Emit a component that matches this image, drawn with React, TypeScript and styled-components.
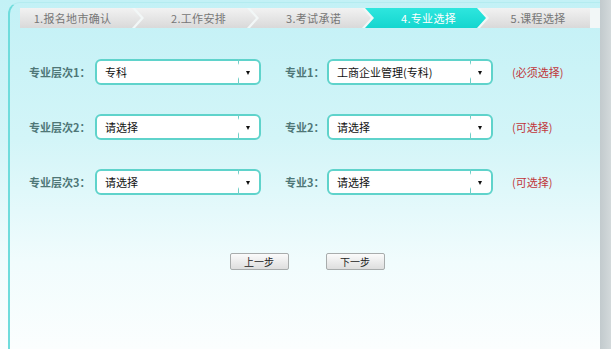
import React from 'react';
import styled, { createGlobalStyle } from 'styled-components';

const GlobalStyle = createGlobalStyle`
	html, body {
		margin: 0;
		padding: 0;
	}
	body {
		font-family: "Noto Sans CJK SC", "Liberation Sans", sans-serif;
	}
`;

const Page = styled.div`
	width: 611px;
	height: 349px;
	display: flex;
	overflow: hidden;
	background: linear-gradient(to bottom, #c3f1f6 0%, #d3f5f8 40%, #f1fcfd 75%, #fbfefe 100%);
`;

const Panel = styled.div`
	flex: 1;
	margin: 2px 0 0 8px;
	border-left: 2px solid #6fdcdc;
	border-top: 1px solid #b4ecf0;
	border-top-left-radius: 12px;
	display: flex;
	flex-direction: column;
	padding: 5px 0 0 10px;
`;

const ScrollTrack = styled.div`
	width: 11px;
	background: linear-gradient(to right, #c2cacd, #d3d9db);
`;

const StepBar = styled.div`
	display: flex;
	height: 20px;
	background: #f2f7f7;
`;

const Step = styled.div<{ $active?: boolean; $first?: boolean; $last?: boolean }>`
	width: ${(p) => (p.$last ? '110px' : '121px')};
	margin-right: ${(p) => (p.$last ? '0' : '-6px')};
	display: flex;
	align-items: center;
	justify-content: center;
	font-size: 11px;
	letter-spacing: 0.3px;
	color: ${(p) => (p.$active ? '#ffffff' : '#767676')};
	background: ${(p) =>
		p.$active
			? 'linear-gradient(to bottom, #2ee6de, #14d6cf)'
			: 'linear-gradient(to bottom, #f2f2f2, #d9d9d9)'};
	clip-path: ${(p) =>
		p.$first
			? 'polygon(0 0, calc(100% - 9px) 0, 100% 50%, calc(100% - 9px) 100%, 0 100%)'
			: p.$last
			? 'polygon(0 0, 100% 0, 100% 100%, 0 100%, 9px 50%)'
			: 'polygon(0 0, calc(100% - 9px) 0, 100% 50%, calc(100% - 9px) 100%, 0 100%, 9px 50%)'};
	padding-left: ${(p) => (p.$first ? '0' : '6px')};
	padding-right: ${(p) => (p.$first ? '16px' : '0')};
	box-sizing: border-box;
`;

const Form = styled.div`
	display: flex;
	flex-direction: column;
	gap: 29px;
	margin-top: 31px;
	padding-left: 9px;
`;

const Row = styled.div`
	display: flex;
	align-items: center;
`;

const Label = styled.div<{ $width: number }>`
	width: ${(p) => p.$width}px;
	font-size: 11px;
	font-weight: bold;
	color: #4f7777;
	white-space: nowrap;
`;

const Select = styled.div`
	position: relative;
	width: 166px;
	height: 26px;
	box-sizing: border-box;
	border: 2px solid #5fd3cb;
	border-radius: 6px;
	background: #ffffff;
	display: flex;
	align-items: center;
	padding-left: 8px;
	font-size: 11px;
	color: #111;
`;

const Divider = styled.span`
	position: absolute;
	right: 20px;
	top: -2px;
	bottom: -2px;
	width: 1px;
	background: linear-gradient(to bottom, #6fcfc8 0, #6fcfc8 4px, transparent 6px, transparent 18px, #6fcfc8 20px, #6fcfc8 100%);
`;

const Arrow = styled.span`
	position: absolute;
	right: 9px;
	top: 10px;
	width: 0;
	height: 0;
	border-left: 2.5px solid transparent;
	border-right: 2.5px solid transparent;
	border-top: 4px solid #111;
`;

const Gap = styled.div<{ $width: number }>`
	width: ${(p) => p.$width}px;
`;

const Note = styled.div`
	font-size: 11px;
	color: #c0363a;
`;

const Buttons = styled.div`
	display: flex;
	justify-content: center;
	gap: 37px;
	margin-top: 58px;
	padding-right: 6px;
`;

const Button = styled.button`
	width: 59px;
	height: 17px;
	padding: 0;
	font-family: inherit;
	font-size: 10px;
	color: #222;
	border: 1px solid #a8acac;
	border-radius: 2px;
	background: linear-gradient(to bottom, #fbfbfb, #dedede);
	display: flex;
	align-items: center;
	justify-content: center;
`;

const steps = ['1.报名地市确认', '2.工作安排', '3.考试承诺', '4.专业选择', '5.课程选择'];

const rows = [
	{ level: '专科', major: '工商企业管理(专科)', note: '(必须选择)' },
	{ level: '请选择', major: '请选择', note: '(可选择)' },
	{ level: '请选择', major: '请选择', note: '(可选择)' },
];

function Dropdown({ value }: { value: string }) {
	return (
		<Select>
			{value}
			<Divider />
			<Arrow />
		</Select>
	);
}

export default function App() {
	return (
		<>
			<GlobalStyle />
			<Page>
				<Panel>
					<StepBar>
						{steps.map((s, i) => (
							<Step key={s} $active={i === 3} $first={i === 0} $last={i === steps.length - 1}>
								{s}
							</Step>
						))}
					</StepBar>

					<Form>
						{rows.map((r, i) => (
							<Row key={i}>
								<Label $width={66}>专业层次{i + 1}：</Label>
								<Dropdown value={r.level} />
								<Gap $width={24} />
								<Label $width={42}>专业{i + 1}：</Label>
								<Dropdown value={r.major} />
								<Gap $width={19} />
								<Note>{r.note}</Note>
							</Row>
						))}
					</Form>

					<Buttons>
						<Button>上一步</Button>
						<Button>下一步</Button>
					</Buttons>
				</Panel>
				<ScrollTrack />
			</Page>
		</>
	);
}
